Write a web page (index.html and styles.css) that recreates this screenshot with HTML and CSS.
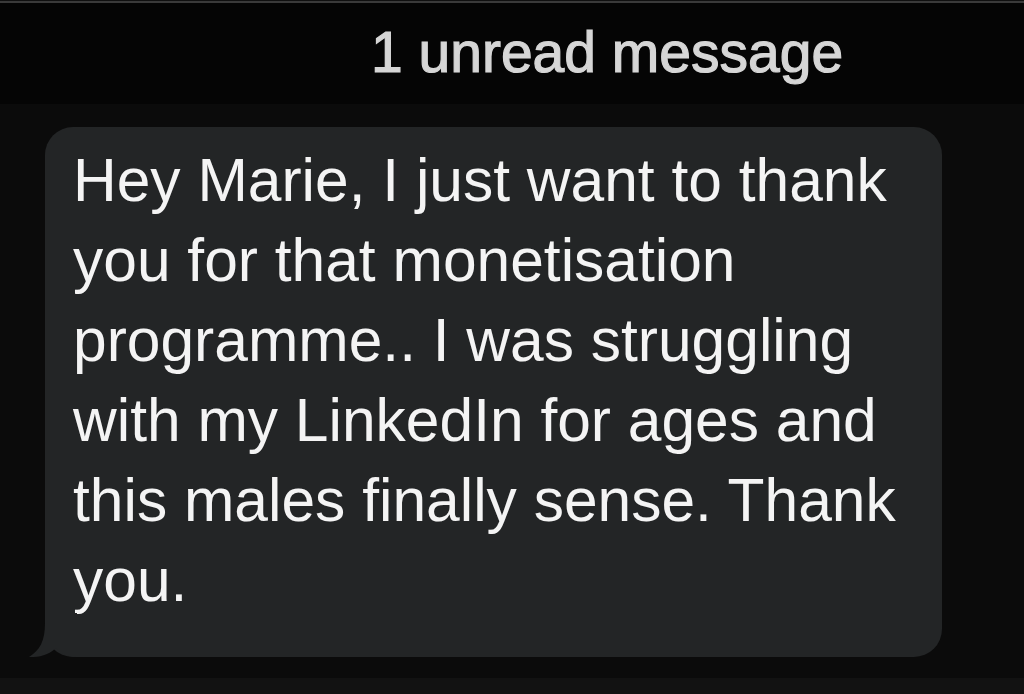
FILE: index.html
```html
<!DOCTYPE html>
<html lang="en">
<head>
<meta charset="utf-8">
<title>1 unread message</title>
<link rel="stylesheet" href="styles.css">
</head>
<body>
<div class="topline"></div>
<header class="header">
  <span class="unread">1 unread message</span>
</header>
<main class="thread">
  <div class="bubble">
    <p class="msg">Hey Marie, I just want to thank<br>you for that monetisation<br>programme.. I was struggling<br>with my LinkedIn for ages and<br>this males finally sense. Thank<br>you.</p>
    <svg class="tail" width="64" height="44" viewBox="0 0 64 44" aria-hidden="true">
      <path d="M16 0 L16 10 C16 28 11 37 0 44 C12 44.5 21 41 27 35 C31 40 37 44 48 44 L48 0 Z" fill="#232526"/>
    </svg>
  </div>
</main>
<footer class="footer"></footer>
</body>
</html>
```

FILE: styles.css
```css
html, body {
  margin: 0;
  padding: 0;
}

body {
  width: 1024px;
  height: 694px;
  background: #0b0b0b;
  font-family: "Liberation Sans", Arial, sans-serif;
  overflow: hidden;
  display: flex;
  flex-direction: column;
}

.topline {
  height: 2px;
  border-top: 1px solid #101010;
  background: #3a3a3a;
}

.header {
  height: 101px;
  box-sizing: border-box;
  padding: 21px 0 23px 371px;
  background: #050505;
}

.unread {
  display: block;
  font-size: 57px;
  line-height: 57px;
  color: #d6d6d6;
  -webkit-text-stroke: 1.2px #d6d6d6;
  white-space: nowrap;
}

.thread {
  flex: 1;
  padding: 23px 82px 0 45px;
}

.bubble {
  position: relative;
  height: 530px;
  box-sizing: border-box;
  padding: 13px 20px 37px 28px;
  background: #232526;
  border-radius: 28px;
}

.msg {
  margin: 0;
  font-size: 60.5px;
  line-height: 80px;
  color: #f4f4f4;
  white-space: nowrap;
}

.tail {
  position: absolute;
  left: -16px;
  bottom: 0;
  display: block;
}

.footer {
  height: 16px;
  background: #121212;
}
```
